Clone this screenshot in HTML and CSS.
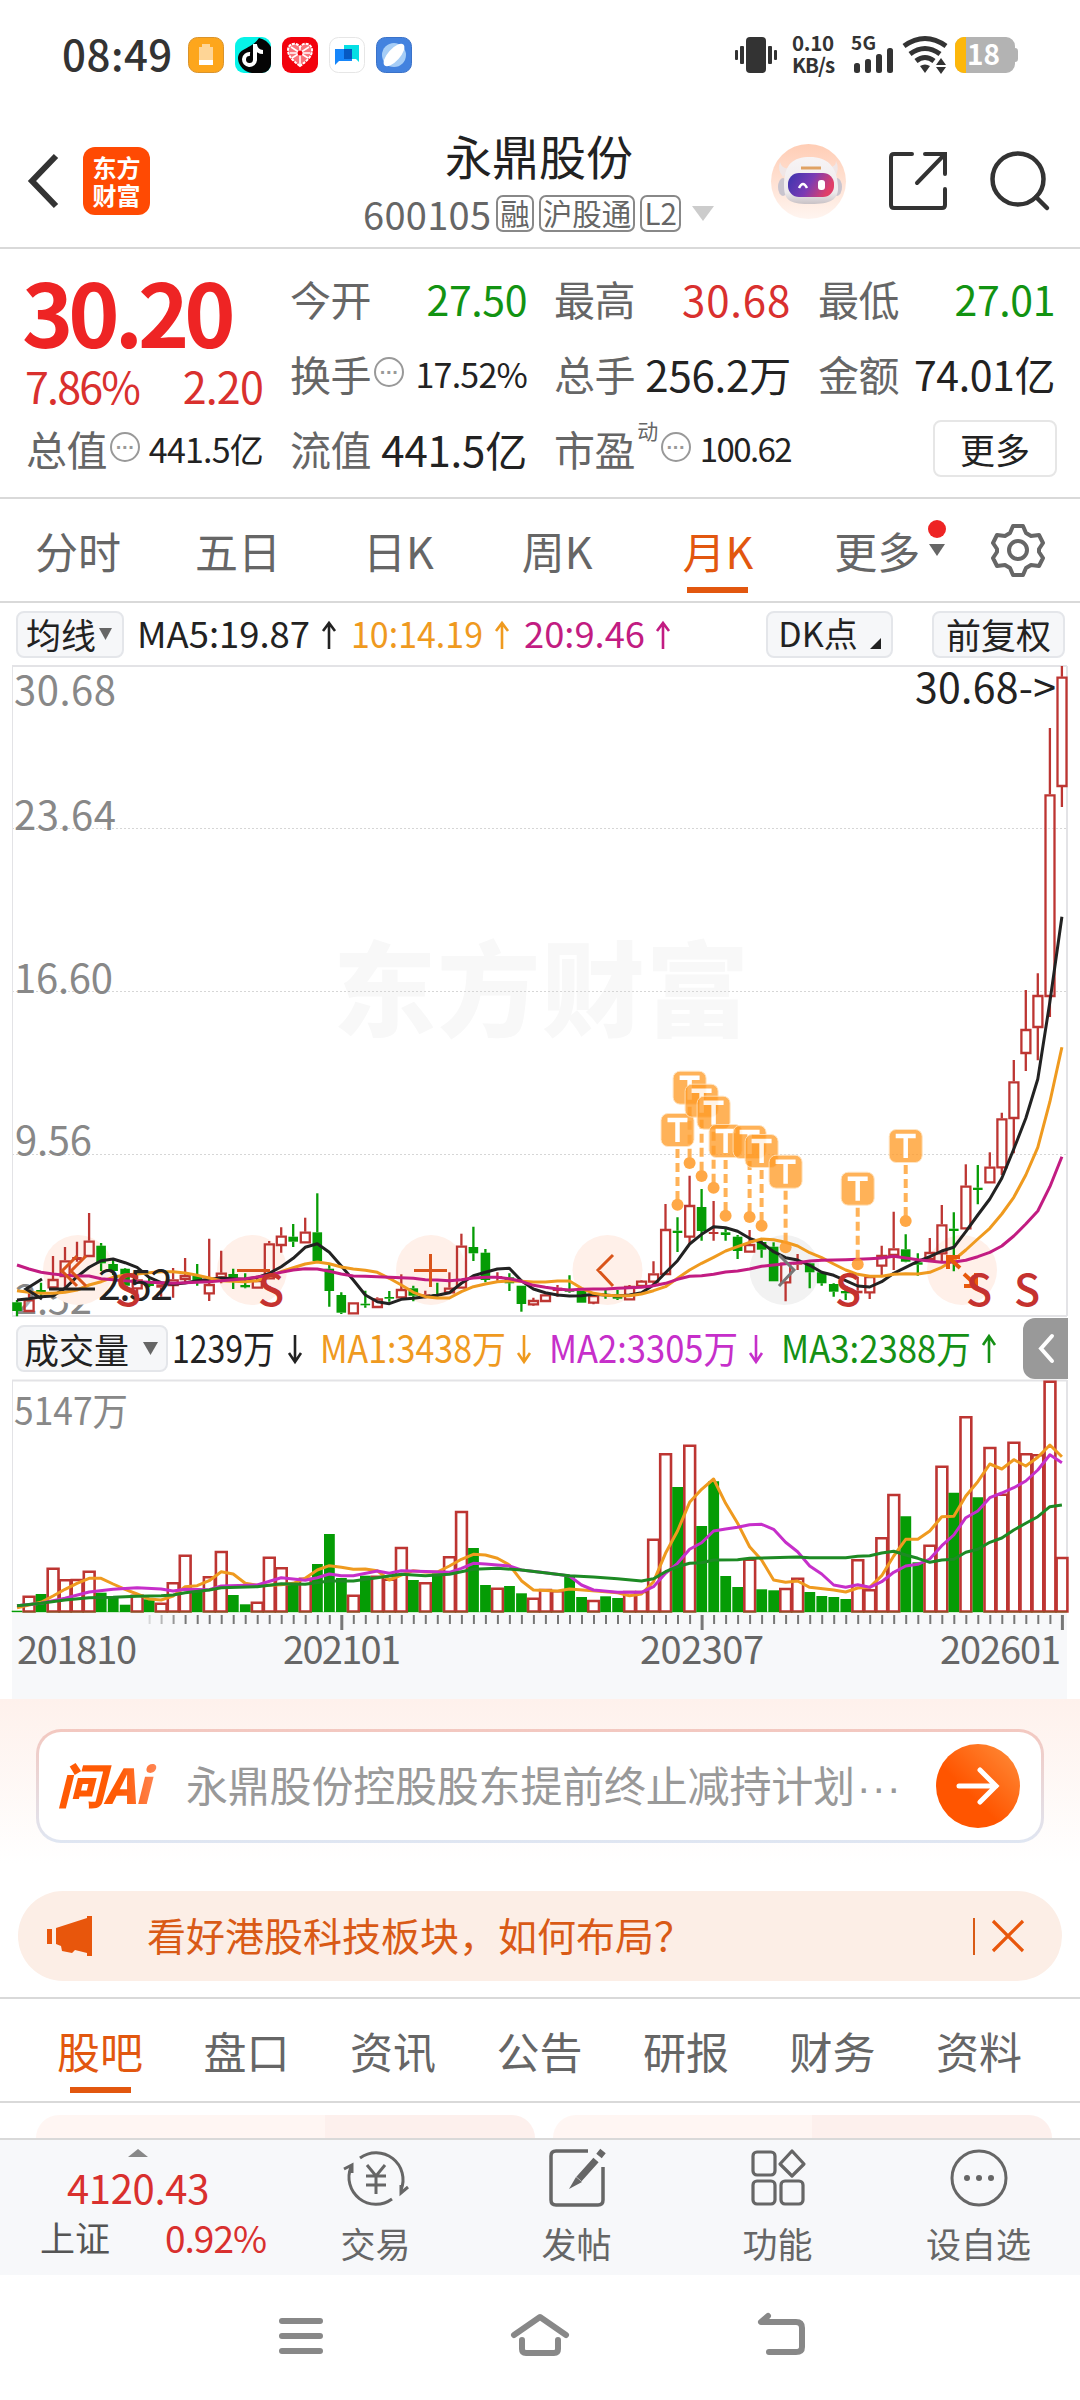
FILE: index.html
```html
<!DOCTYPE html>
<html lang="zh-CN">
<head>
  <meta charset="UTF-8" />
  <meta name="viewport" content="width=device-width, initial-scale=1.0"/>
  <title>永鼎股份 600105</title>
  <link rel="stylesheet" href="styles.css">
</head>
<body>

  <!-- 状态栏 -->
  <div class="status">
    <span class="time">08:49</span>
    <div class="apps">
      <svg width="36" height="36" viewBox="0 0 36 36"><rect x=".5" y=".5" width="35" height="35" rx="9" fill="#fda61c" stroke="#d9932c"/><path d="M14 7h8v3h3v18H11V10h3z" fill="#fed596"/><rect x="11" y="23" width="14" height="5" fill="#fff"/></svg>
      <svg width="36" height="36" viewBox="0 0 36 36"><rect width="36" height="36" rx="9" fill="#06f3e8"/><path d="M24 1a18 18 0 0 1 12 9v17a9 9 0 0 1-9 9H17A16 16 0 0 1 3 22C3 10 16 13 24 1z" fill="#050505"/><path d="M20 7v16a5.500 5.500 0 1 1-5-6M20 8c1 5 4 7 8 7" fill="none" stroke="#fff" stroke-width="4"/></svg>
      <svg width="36" height="36" viewBox="0 0 36 36"><rect width="36" height="36" rx="9" fill="#f2020d"/><path d="M18 29C10 23 6 19 6 13s8-9 12-3c4-6 12-3 12 3s-4 10-12 16z" fill="#f9737a" stroke="#fff" stroke-width="2" stroke-dasharray="3 1"/><path d="M9 10l17 11M27 10L10 21M18 9v19M8 16h20" stroke="#fff" stroke-width="1.500"/><circle cx="18" cy="16" r="2.500" fill="#f2020d"/></svg>
      <svg width="36" height="36" viewBox="0 0 36 36"><rect x=".5" y=".5" width="35" height="35" rx="9" fill="#fff" stroke="#e6e6e6"/><path d="M15 8h15v17l-3-3H15z" fill="#05dfe4"/><path d="M6 12h17v12H10l-4 4z" fill="#1686fa"/><path d="M15 12h8v10h-8z" fill="#0659c3"/></svg>
      <svg width="36" height="36" viewBox="0 0 36 36"><rect x=".5" y=".5" width="35" height="35" rx="9" fill="#4382df" stroke="#3a72c9"/><circle cx="18" cy="18" r="12" fill="#a6cdf6"/><ellipse cx="18" cy="18" rx="6" ry="14" transform="rotate(42 18 18)" fill="#fff"/></svg>
    </div>
    <div class="signals">
      <svg width="44" height="38" viewBox="0 0 44 38" fill="#333"><rect x="11" y="1" width="20" height="36" rx="4"/><rect y="14" width="3" height="10" rx="1"/><rect x="5" y="10" width="4" height="18" rx="1"/><rect x="33" y="10" width="4" height="18" rx="1"/><rect x="39" y="14" width="3" height="10" rx="1"/></svg>
      <div class="speed"><b>0.10</b><b>KB/s</b></div>
      <svg class="cell" width="44" height="38" viewBox="0 0 44 38" fill="#333"><text x="0" y="14" font-size="19" font-weight="700" textLength="25">5G</text><rect x="3" y="27" width="6" height="10" rx="2.500"/><rect x="14" y="23" width="6" height="14" rx="2.500"/><rect x="25" y="18" width="6" height="19" rx="2.500"/><rect x="36" y="12" width="6" height="25" rx="2.500"/></svg>
      <svg class="wifi" width="44" height="38" viewBox="0 0 44 38"><path d="M1 10Q22-5 43 10M7 18q15-11 30 0M13 25q9-7 18 0" fill="none" stroke="#333" stroke-width="5"/><path d="M17 30q5-3 10 0l-5 7zM33 29l5-7 5 7zM33 31l5 7 5-7z" fill="#333"/></svg>
      <svg width="64" height="36" viewBox="0 0 64 36"><path d="M9 0h42a9 9 0 0 1 9 9v2q3 0 3 3v8q0 3-3 3v2a9 9 0 0 1-9 9H9a9 9 0 0 1-9-9V9a9 9 0 0 1 9-9z" fill="#b3b3b3"/><path d="M11 0v36H9a9 9 0 0 1-9-9V9a9 9 0 0 1 9-9z" fill="#fdb70a"/><text x="12" y="28" font-size="28" font-weight="700" fill="#fff" textLength="33">18</text></svg>
    </div>
  </div>

  <!-- 标题栏 -->
  <header class="header">
    <svg class="back" width="32" height="56" viewBox="0 0 32 56"><path d="M28 3L4 28l24 25" fill="none" stroke="#333" stroke-width="6"/></svg>
    <div class="brand"><span>东方</span><span>财富</span></div>
    <div class="title">
      <h1>永鼎股份</h1>
      <div class="sub">
        <span class="code">600105</span>
        <span class="tag">融</span><span class="tag">沪股通</span><span class="tag">L2</span>
        <svg width="22" height="15" viewBox="0 0 22 15"><path d="M0 0h22L11 15z" fill="#ccc"/></svg>
      </div>
    </div>
    <div class="tools">
      <svg width="75" height="75" viewBox="0 0 75 75">
        <defs>
          <linearGradient id="halo" x2="0" y2="1"><stop offset="0" stop-color="#ffcdb5"/><stop offset="1" stop-color="#fff5f0"/></linearGradient>
          <linearGradient id="shell" x2="0" y2="1"><stop offset="0" stop-color="#f7f4f5"/><stop offset=".75" stop-color="#eeeaec"/><stop offset="1" stop-color="#c9c2c6"/></linearGradient>
          <linearGradient id="visor" x2="1" y2=".3"><stop offset="0" stop-color="#3a34ae"/><stop offset=".55" stop-color="#7a3bb4"/><stop offset="1" stop-color="#e03e68"/></linearGradient>
        </defs>
        <circle cx="37.500" cy="37.500" r="37.500" fill="url(#halo)"/>
        <path d="M9 18q2 8 11 6l-8 9q-6-7-3-15zM65 17q0 7-9 6l8 10q5-8 1-16z" fill="#f0e6e6"/>
        <ellipse cx="12" cy="43" rx="5" ry="9" fill="#c9c4ce"/><ellipse cx="66" cy="43" rx="5" ry="9" fill="#c9c4ce"/>
        <path d="M13 42C13 20 22 13 39 13s27 9 28 29c1 14-8 18-27 18s-27-2-27-18z" fill="url(#shell)"/>
        <rect x="17" y="29" width="46" height="24" rx="11" fill="url(#visor)"/>
        <path d="M28 44q4-8 8 0" fill="none" stroke="#fff" stroke-width="2.500"/><rect x="47" y="36" width="7" height="10" rx="3" fill="#fff"/>
        <path d="M30 24h20" stroke="#e0a264" stroke-width="3"/>
      </svg>
      <svg width="58" height="58" viewBox="0 0 58 58" fill="none" stroke="#333" stroke-width="4" stroke-linecap="round"><path d="M23 2H5Q2 2 2 5v48q0 3 3 3h48q3 0 3-3V37M36 2h20v20M56 2L28 31"/></svg>
      <svg width="60" height="60" viewBox="0 0 60 60" fill="none" stroke="#333" stroke-width="4.500" stroke-linecap="round"><circle cx="28" cy="28" r="25.500"/><path d="M46 46l11 11"/></svg>
    </div>
  </header>

  <!-- 行情数据 -->
  <section class="quote">
    <div class="now">
      <strong>30.20</strong>
      <div class="change"><span>7.86%</span><span>2.20</span></div>
    </div>
    <div class="cell-q"><label>今开</label><span class="green">27.50</span></div>
    <div class="cell-q"><label>最高</label><span class="red wide">30.68</span></div>
    <div class="cell-q"><label>最低</label><span class="green">27.01</span></div>
    <div class="cell-q"><label>换手<i class="info">···</i></label><span class="small">17.52%</span></div>
    <div class="cell-q"><label>总手</label><span class="big">256.2万</span></div>
    <div class="cell-q"><label>金额</label><span>74.01亿</span></div>
    <div class="cell-q"><label>总值<i class="info">···</i></label><span class="small">441.5亿</span></div>
    <div class="cell-q"><label>流值</label><span class="big">441.5亿</span></div>
    <div class="cell-q"><label>市盈<sup>动</sup><i class="info">···</i></label><span class="small pe">100.62</span></div>
    <div class="cell-q end"><button class="more">更多</button></div>
  </section>

  <!-- 周期切换 -->
  <nav class="periods">
    <span>分时</span><span>五日</span><span>日K</span><span>周K</span><span class="active">月K</span>
    <span class="drop">更多<svg width="18" height="36" viewBox="0 0 18 36"><circle cx="9" cy="9" r="9" fill="#ee2424"/><path d="M1 24h16L9 36z" fill="#666"/></svg></span>
    <svg class="gear" width="54" height="54" viewBox="0 0 54 54" fill="none" stroke="#666" stroke-width="4" stroke-linejoin="round"><path d="M22 3h10l3 7 5 3 8-1 4 8-4 6v3l4 6-4 8-8-1-5 3-3 7H22l-3-7-5-3-8 1-4-8 4-6v-3l-4-6 4-8 8 1 5-3z"/><circle cx="27" cy="27" r="9"/></svg>
  </nav>

  <!-- 均线 -->
  <div class="ma-bar">
    <button class="pill ma">均线<svg width="13" height="12" viewBox="0 0 13 12"><path d="M0 0h13L6.500 12z" fill="#666"/></svg></button>
    <svg class="legend" width="540" height="62" viewBox="136 603 540 62" font-size="36">
      <text x="137" y="648" fill="#222" textLength="173" lengthAdjust="spacingAndGlyphs">MA5:19.87</text>
      <text x="351" y="648" fill="#ef9a1f" textLength="132" lengthAdjust="spacingAndGlyphs">10:14.19</text>
      <text x="524" y="648" fill="#c21c82" textLength="121" lengthAdjust="spacingAndGlyphs">20:9.46</text>
      <g fill="none" stroke-width="2.600"><path d="M329 649v-26m-6 8l6-8 6 8" stroke="#222"/><path d="M502 649v-26m-6 8l6-8 6 8" stroke="#ef9a1f"/><path d="M663 649v-26m-6 8l6-8 6 8" stroke="#c21c82"/></g>
    </svg>
    <button class="pill dk">DK点<svg width="11" height="11" viewBox="0 0 11 11"><path d="M11 0v11H0z" fill="#222"/></svg></button>
    <button class="pill fq">前复权</button>
  </div>

  <!-- K线图 -->
  <svg class="chart" id="kline" width="1080" height="652" viewBox="0 665 1080 652">
    <text x="333" y="1029" font-size="103" font-weight="900" fill="#f8f8f8" textLength="416">东方财富</text>
    <g stroke="#d6d6d6" stroke-width="1" stroke-dasharray="2 2"><path d="M12 828.500h1055M12 991.500h1055M12 1154.500h1055"/></g>
    <path d="M12.500 666v650" stroke="#e3e3e6"/><path d="M1067 666v650M12 666h1055M12 1316h1055" stroke="#e3e3e6" stroke-width="2"/>
    <g font-size="40" fill="#888"><text x="14" y="705" textLength="102">30.68</text><text x="14" y="830" textLength="102">23.64</text><text x="14" y="993" textLength="99">16.60</text><text x="15" y="1155" textLength="77">9.56</text><text x="15" y="1314" textLength="77">2.52</text></g>
    <g stroke="none">
      <g fill="#fff0e9"><circle cx="78" cy="1270" r="35"/><circle cx="252" cy="1270" r="35"/><circle cx="431" cy="1270" r="35"/><circle cx="607.500" cy="1270" r="35"/><circle cx="962" cy="1270" r="35"/></g>
      <circle cx="784.500" cy="1270" r="35" fill="#f2f2f2"/>
    </g>
    <g id="candles" stroke-width="2.300"></g>
    <g id="lines" fill="none" stroke-width="3" stroke-linejoin="round"></g>
    <g stroke="#d9541a" stroke-width="3" fill="none">
      <path d="M77 1256l-15 15 15 15M86 1256l-15 15 15 15M237 1270.500h33M414 1270.500h33M430.500 1254v33M613 1255l-15 15 15 16"/>
      <path d="M779 1255l15 15-15 16" stroke="#777"/>
      <g stroke="#e8590c" stroke-width="4"><path d="M948 1269v-12h12M948 1257l12 11M964 1274l12 11M964 1286h12v-13"/></g>
    </g>
    <g font-size="41" fill="#222"><text x="915" y="703" textLength="141">30.68-&gt;</text><text x="98" y="1300" textLength="75">2.52</text></g>
    <path d="M42 1279l-16 10 16 10M49 1289h46" fill="none" stroke="#222" stroke-width="3"/>
    <g id="marks"></g>
    <g font-size="43" font-weight="500" fill="#c5322f"><text x="115" y="1306">S</text><text x="258" y="1306">S</text><text x="835" y="1306">S</text><text x="966" y="1306">S</text><text x="1014" y="1306">S</text></g>
  </svg>

  <!-- 成交量 -->
  <div class="vol-bar">
    <button class="pill vol">成交量<svg width="15" height="13" viewBox="0 0 15 13"><path d="M0 0h15L7.500 13z" fill="#666"/></svg></button>
    <svg class="legend" width="840" height="62" viewBox="170 1318 840 62" font-size="38">
      <text x="172" y="1363" fill="#222" textLength="103" lengthAdjust="spacingAndGlyphs">1239万</text>
      <text x="320" y="1363" fill="#ef9a1f" textLength="186" lengthAdjust="spacingAndGlyphs">MA1:3438万</text>
      <text x="549" y="1363" fill="#c62fca" textLength="189" lengthAdjust="spacingAndGlyphs">MA2:3305万</text>
      <text x="781" y="1363" fill="#159015" textLength="190" lengthAdjust="spacingAndGlyphs">MA3:2388万</text>
      <g fill="none" stroke-width="2.600"><path d="M295 1335v27m-6-9l6 9 6-9" stroke="#222"/><path d="M524 1335v27m-6-9l6 9 6-9" stroke="#ef9a1f"/><path d="M756 1335v27m-6-9l6 9 6-9" stroke="#c62fca"/><path d="M989 1363v-27m-6 9l6-9 6 9" stroke="#159015"/></g>
    </svg>
    <div class="fold"><svg width="16" height="29" viewBox="0 0 16 29"><path d="M14 2L3 14.500 14 27" fill="none" stroke="#fff" stroke-width="4" stroke-linecap="round"/></svg></div>
  </div>
  <svg class="chart" id="volume" width="1080" height="319" viewBox="0 1380 1080 319">
    <path d="M12 1613h1055v86H12z" fill="#f7f8fa"/>
    <path d="M12.500 1380v232" stroke="#e3e3e6"/><path d="M1067 1380v232M12 1380.500h1055" stroke="#e3e3e6" stroke-width="2"/>
    <text x="14" y="1425" font-size="38" fill="#888" textLength="114" lengthAdjust="spacingAndGlyphs">5147万</text>
    <g id="bars" stroke-width="2.600"></g>
    <g id="vlines" fill="none" stroke-width="3" stroke-linejoin="round"></g>
    <g id="ticks" stroke="#777"></g>
    <g font-size="38" fill="#666"><text x="17" y="1664" textLength="120">201810</text><text x="283" y="1664" textLength="118">202101</text><text x="640" y="1664" textLength="124">202307</text><text x="940" y="1664" textLength="121">202601</text></g>
  </svg>

  <!-- 问AI -->
  <section class="ask">
    <div class="ask-box">
      <div class="ask-logo">问Ai</div>
      <p>永鼎股份控股股东提前终止减持计划<span>···</span></p>
      <div class="go"><svg width="44" height="40" viewBox="0 0 44 40" fill="none" stroke="#fff" stroke-width="5" stroke-linecap="round"><path d="M3 20h37M24 4l16 16-16 16"/></svg></div>
    </div>
  </section>

  <section class="notice">
    <svg width="46" height="40" viewBox="0 0 46 40" fill="#e8560c"><path d="M0 13h5v15H0zM9 12L40 2V0h5v40h-5v-3l-12-3-3 3-10-2-1-5-5-2z"/></svg>
    <p>看好港股科技板块，如何布局？</p>
    <i></i>
    <svg width="34" height="34" viewBox="0 0 34 34"><path d="M2 2l30 30M32 2L2 32" stroke="#e8560c" stroke-width="3.200"/></svg>
  </section>

  <nav class="tabs">
    <span class="active">股吧</span><span>盘口</span><span>资讯</span><span>公告</span><span>研报</span><span>财务</span><span>资料</span>
  </nav>

  <div class="cards"><div></div><div></div></div>

  <!-- 底部栏 -->
  <footer class="bottom">
    <div class="index">
      <svg width="20" height="8" viewBox="0 0 20 8"><path d="M10 0l10 8H0z" fill="#888"/></svg>
      <span class="point">4120.43</span>
      <div><span>上证</span><span class="red">0.92%</span></div>
    </div>
    <div class="item">
      <svg width="66" height="60" viewBox="0 0 66 60" fill="none" stroke="#666" stroke-width="3"><path d="M17 10A27 27 0 0 1 58 42M49 51A27 27 0 0 1 8 19M1 21l8-4v8M65 39l-7 6v-8"/><path d="M24 17l9 11 9-11M33 28v18M23 28h20M23 37h20"/></svg>
      <span>交易</span>
    </div>
    <div class="item">
      <svg width="56" height="60" viewBox="0 0 56 60" fill="none" stroke="#666" stroke-width="3.500"><path d="M39 3H7Q2 3 2 8v44q0 5 5 5h42q5 0 5-5V19"/><path d="M54 3l-4 5M47 12L30 31" stroke-width="7"/><path d="M27 29l6 5-13 7z" fill="#666" stroke="none"/></svg>
      <span>发帖</span>
    </div>
    <div class="item">
      <svg width="56" height="60" viewBox="0 0 56 60" fill="none" stroke="#666" stroke-width="3.200"><rect x="3" y="4" width="22" height="23" rx="4"/><rect x="3" y="33" width="22" height="23" rx="4"/><rect x="31" y="33" width="22" height="23" rx="4"/><path d="M42 3l12 13-12 12-12-12z" stroke-linejoin="round"/></svg>
      <span>功能</span>
    </div>
    <div class="item">
      <svg width="60" height="60" viewBox="0 0 60 60"><circle cx="30" cy="30" r="27" fill="none" stroke="#666" stroke-width="3"/><g fill="#666"><circle cx="18" cy="30" r="3"/><circle cx="30" cy="30" r="3"/><circle cx="42" cy="30" r="3"/></g></svg>
      <span>设自选</span>
    </div>
  </footer>

  <!-- 系统导航 -->
  <div class="sysnav">
    <svg width="46" height="46" viewBox="0 0 46 46" stroke="#888" stroke-width="6" stroke-linecap="round"><path d="M4 9h38M4 24h38M4 39h38"/></svg>
    <svg width="60" height="46" viewBox="0 0 60 46" fill="none" stroke="#888" stroke-width="6" stroke-linecap="round" stroke-linejoin="round"><path d="M4 23L30 5l26 18M12 28v9q0 4 4 4h28q4 0 4-4v-9"/></svg>
    <svg width="50" height="46" viewBox="0 0 50 46" fill="none" stroke="#888" stroke-width="6" stroke-linecap="round" stroke-linejoin="round"><path d="M12 4L5 10h35q6 0 6 6v19q0 5-6 5H13"/></svg>
  </div>

  <script src="script.js"></script>
</body>
</html>
```
FILE: styles.css
```css
* {
  box-sizing: border-box;
}
body {
  margin: 0;
  width: 1080px;
  height: 2400px;
  overflow: hidden;
  background: #fff;
  color: #222;
  font-family: "Noto Sans CJK SC", sans-serif;
  white-space: nowrap;
}
svg {
  display: block;
  flex: none;
  overflow: visible;
}
h1, p {
  margin: 0;
  font-weight: 400;
}
button {
  padding: 0;
  font-family: inherit;
  color: #222;
}
.red {
  color: #d9302e;
}
.green {
  color: #129312;
}

/* 状态栏 */
.status {
  display: flex;
  align-items: center;
  height: 110px;
  padding: 0 61px 0 62px;
}
.time {
  width: 126px;
  margin-top: -5px;
  font-size: 42px;
  font-weight: 500;
  color: #333;
  letter-spacing: 0.5px;
}
.apps {
  display: flex;
  gap: 11px;
}
.signals {
  display: flex;
  align-items: center;
  margin-left: auto;
  color: #333;
}
.speed {
  display: flex;
  flex-direction: column;
  width: 43px;
  margin: -5px 0 0 13px;
  font-size: 20.5px;
  line-height: 22px;
  letter-spacing: -0.3px;
}
.speed b + b {
  letter-spacing: -1px;
}
.cell {
  margin-left: 16px;
}
.wifi {
  margin: 0 8px;
}

/* 标题栏 */
.header {
  display: flex;
  align-items: center;
  height: 139px;
  padding: 5px 30px 0 28px;
  border-bottom: 2px solid #d9d9d9;
}
.back {
  margin-bottom: 1px;
}
.brand {
  display: flex;
  flex-direction: column;
  align-items: center;
  justify-content: center;
  flex: none;
  width: 67px;
  height: 68px;
  margin: 0 0 1px 23px;
  border-radius: 12px;
  background: #ff4a03;
  color: #fff;
  font-size: 24px;
  font-weight: 700;
  line-height: 28px;
}
.title {
  flex: 1;
  padding-left: 213px;
}
.title h1 {
  margin: -2px 0 0 82px;
  font-size: 47px;
  line-height: 64px;
}
.sub {
  display: flex;
  align-items: center;
  height: 50px;
  padding-top: 3px;
}
.code {
  margin-right: 5px;
  font-size: 38px;
  line-height: 48px;
  color: #666;
  letter-spacing: 0.3px;
}
.tag {
  height: 37px;
  margin-right: 5px;
  padding: 0 2px;
  border: 2px solid #888;
  border-radius: 7px;
  font-size: 29.5px;
  line-height: 31px;
  color: #666;
}
.sub svg {
  margin-left: 6px;
}
.tools {
  display: flex;
  align-items: center;
  gap: 43px;
}

/* 行情数据 */
.quote {
  display: grid;
  grid-template-columns: repeat(4, 237px);
  grid-template-rows: repeat(3, 75px);
  column-gap: 27px;
  height: 250px;
  padding: 12px 0 0 26px;
  border-bottom: 2px solid #d9d9d9;
}
.now {
  grid-row: span 2;
  color: #ee2424;
}
.now strong {
  display: block;
  margin-left: -4px;
  font-size: 87px;
  font-weight: 700;
  line-height: 98px;
  letter-spacing: -5px;
}
.change {
  display: flex;
  justify-content: space-between;
  padding-top: 3px;
  margin-left: -1px;
  font-size: 43px;
  line-height: 46px;
  color: #d9302e;
  letter-spacing: -1.8px;
}
.change span + span {
  letter-spacing: -0.8px;
}
.cell-q {
  display: flex;
  align-items: center;
  justify-content: space-between;
  font-size: 41px;
  line-height: 73px;
  letter-spacing: -0.4px;
}
.cell-q .wide {
  font-size: 42px;
  letter-spacing: 0.8px;
}
.cell-q .big {
  font-size: 42px;
  letter-spacing: -0.2px;
}
.cell-q label {
  display: flex;
  align-items: center;
  color: #666;
}
.cell-q .small {
  font-size: 34px;
  letter-spacing: -0.8px;
}
.cell-q .pe {
  font-size: 33px;
  letter-spacing: -1.6px;
}
.cell-q sup {
  align-self: flex-start;
  font-size: 21px;
  line-height: 36px;
  margin-left: 2px;
}
.info {
  display: flex;
  align-items: center;
  justify-content: center;
  width: 30px;
  height: 30px;
  margin: -4px 0 0 3px;
  border: 2px solid #999;
  border-radius: 50%;
  font-family: "Liberation Sans", sans-serif;
  font-size: 20px;
  font-style: normal;
  font-weight: 700;
  line-height: 26px;
  color: #999;
}
.cell-q.end {
  justify-content: flex-end;
}
.more {
  width: 124px;
  height: 57px;
  margin-right: -2px;
  border: 2px solid #e6e6e6;
  border-radius: 8px;
  background: #fff;
  font-size: 35px;
  line-height: 48px;
}

/* 周期切换 */
.periods {
  display: flex;
  align-items: center;
  height: 104px;
  padding: 0 35px 0 35px;
  border-bottom: 2px solid #d9d9d9;
  font-size: 43px;
  line-height: 102px;
  color: #666;
}
.periods span {
  margin-right: 74px;
}
.periods span:nth-child(3) {
  margin: 0 88px 0 8px;
}
.periods span:nth-child(4) {
  margin-right: 90px;
}
.periods .active {
  margin-right: 81px;
}
.periods .drop {
  display: flex;
  align-items: center;
  margin-right: 0;
}
.periods .gear {
  margin-left: auto;
}
.drop svg {
  margin: 0 0 24px 8px;
}
.active {
  color: #e2570f;
  background: linear-gradient(#e2570f, #e2570f) center bottom 8px / 61px 6px no-repeat;
}

/* 均线 */
.ma-bar,
.vol-bar {
  display: flex;
  align-items: center;
  height: 62px;
  padding-left: 16px;
}
.pill {
  display: flex;
  align-items: center;
  justify-content: center;
  flex: none;
  height: 47px;
  border: 2px solid #e4e6ea;
  border-radius: 8px;
  background: #f6f7f9;
  font-size: 35px;
  line-height: 40px;
}
.ma {
  width: 108px;
  margin-right: 12px;
  padding-right: 2px;
}
.ma svg {
  margin-left: 3px;
}
.dk {
  width: 127px;
  margin-left: 90px;
  padding-bottom: 2px;
  font-size: 34px;
}
.dk svg {
  margin: 20px 0 0 12px;
}
.fq {
  width: 133px;
  margin-left: 39px;
}
.vol-bar {
  height: 63px;
}
.vol {
  width: 152px;
  margin-right: 2px;
  padding-right: 2px;
}
.vol svg {
  margin-left: 14px;
}
.fold {
  display: flex;
  align-items: center;
  justify-content: center;
  width: 45px;
  height: 61px;
  margin-left: 13px;
  border-radius: 12px 0 0 12px;
  background: #999;
}

/* 问AI */
.ask {
  height: 192px;
  padding: 30px 36px 0;
  background: linear-gradient(#fef1ec, #fff 165px);
}
.ask-box {
  display: flex;
  align-items: center;
  height: 114px;
  padding: 0 21px 0 18px;
  border: 3px solid transparent;
  border-radius: 25px;
  background: linear-gradient(#fff, #fff) padding-box, linear-gradient(#f3c8c0, #dfe6f2) border-box;
}
.ask-logo {
  flex: none;
  width: 104px;
  margin: -6px 25px 0 0;
  font-size: 48px;
  font-weight: 900;
  font-style: italic;
  line-height: 60px;
  letter-spacing: -1px;
  background: linear-gradient(90deg, #ff5a04 60%, #ff8a5c);
  -webkit-background-clip: text;
  background-clip: text;
  color: transparent;
}
.ask-box p {
  flex: 1;
  font-size: 42px;
  line-height: 60px;
  letter-spacing: -0.2px;
  color: #999;
}
.ask-box p span {
  margin-left: 2px;
  font-family: "Liberation Sans", sans-serif;
  font-size: 42px;
  letter-spacing: 1px;
}
.go {
  display: flex;
  align-items: center;
  justify-content: center;
  flex: none;
  width: 84px;
  height: 84px;
  border-radius: 50%;
  background: linear-gradient(45deg, #ff5500 40%, #ff8f3c);
}

.notice {
  display: flex;
  align-items: center;
  height: 90px;
  margin: 0 18px 16px;
  padding: 0 37px 0 29px;
  border-radius: 45px;
  background: #fceee6;
}
.notice p {
  flex: 1;
  margin: -5px 0 0 54px;
  font-size: 39px;
  line-height: 60px;
  color: #d95a16;
}
.notice i {
  width: 2px;
  height: 37px;
  margin-right: 16px;
  background: #d95a16;
}

/* 资讯标签 */
.tabs {
  display: flex;
  justify-content: space-between;
  height: 106px;
  padding: 0 58px 0 57px;
  border-top: 2px solid #d9d9d9;
  border-bottom: 2px solid #d9d9d9;
  font-size: 43px;
  line-height: 102px;
  color: #666;
}
.cards {
  display: flex;
  gap: 18px;
  height: 35px;
  padding: 12px 28px 0 36px;
}
.cards div {
  flex: 1;
  border-radius: 25px 25px 0 0;
  background: linear-gradient(90deg, #fff6f3 58%, #fdf0ed 58%);
}
.cards div + div {
  background: linear-gradient(90deg, #fff6f3 52%, #fdf0ed 52%);
}

/* 底部栏 */
.bottom {
  display: flex;
  height: 137px;
  padding-left: 34px;
  border-top: 2px solid #d9d9d9;
  background: #f7f8fa;
  color: #666;
}
.index {
  display: flex;
  flex-direction: column;
  align-items: center;
  width: 210px;
  padding-top: 9px;
}
.index > svg {
  margin: 0 0 4px -2px;
}
.point {
  margin-left: -2px;
  height: 54px;
  font-size: 40px;
  line-height: 52px;
  color: #d9302e;
  letter-spacing: -0.3px;
}
.index div {
  display: flex;
  justify-content: space-between;
  width: 226px;
  margin-left: 28px;
  font-size: 35px;
  line-height: 44px;
  color: #555;
}
.index .red {
  color: #d9302e;
  font-size: 37px;
  letter-spacing: -1px;
}
.item {
  display: flex;
  flex-direction: column;
  align-items: center;
  width: 201px;
  padding-top: 8px;
  font-size: 35px;
  line-height: 50px;
}
.item:nth-child(2) {
  margin-left: 31px;
}
.item svg {
  margin-bottom: 10px;
}

/* 系统导航 */
.sysnav {
  display: flex;
  justify-content: center;
  gap: 186px;
  height: 126px;
  padding: 37px 0 0 3px;
}
```
FILE: script.js
```javascript
// 颜色, 最高, 实体上, 实体下, 最低
const candles = [
  "g 780 787 813 829", "r 760 778 813 813", "g 728 750 757 768", "r 648 717 742 742",
  "r 621 661 708 745", "r 605 651 660 665", "r 519 602 648 648", "g 609 617 670 693",
  "g 660 672 693 705", "g 684 686 737 740", "r 700 718 745 760", "g 715 728 738 742",
  "r 725 733 743 770", "r 684 718 735 773", "r 654 705 717 730", "g 672 708 720 737",
  "r 596 732 760 783", "r 632 698 712 730", "g 686 702 713 747", "g 700 735 742 745",
  "r 715 720 743 743", "r 603 610 715 715", "r 562 587 615 638", "g 552 590 605 621",
  "r 533 575 607 607", "g 460 577 663 663", "g 675 686 753 800", "g 757 765 818 822",
  "r 787 787 820 820", "g 752 791 796 803", "r 772 775 801 801", "g 753 771 776 785",
  "r 703 747 772 772", "g 737 745 767 784", "r 752 763 770 775", "g 728 762 768 772",
  "r 697 743 757 757", "r 581 617 743 743", "g 560 621 640 663", "g 627 638 720 727",
  "r 697 708 714 722", "g 700 712 730 753", "g 737 737 792 815", "r 773 780 793 797",
  "r 760 763 783 783", "r 735 743 753 770", "g 706 750 755 758", "g 752 752 788 788",
  "r 760 765 788 793", "g 750 763 767 776", "g 750 763 776 780", "r 735 738 778 778",
  "r 720 722 738 738", "r 664 700 725 738", "r 492 567 702 702", "g 532 572 579 636",
  "r 407 495 590 612", "g 447 501 573 602", "r 483 576 582 602", "g 565 577 585 602",
  "g 585 590 633 657", "r 570 612 635 635", "g 600 606 629 653", "g 607 620 724 724",
  "r 665 668 727 784", "r 642 668 674 690", "g 668 670 697 745", "g 695 697 730 737",
  "g 730 732 755 770", "g 745 753 760 780", "r 710 752 760 767", "r 705 708 757 777",
  "r 617 645 677 709", "r 515 625 645 690", "g 583 628 665 667", "g 640 667 674 707",
  "r 594 636 657 665", "r 495 553 640 665", "g 517 566 573 694", "r 373 437 565 565",
  "g 375 443 450 493", "r 337 380 427 427", "r 218 235 382 405", "r 60 124 234 340",
  "r -150 -33 39 93", "r -200 -135 -39 61", "r -936 -737 -132 -69", "r -1122 -1090 -762 -699"
];

const ma = {
  "#222": [780,776,770,768,745,710,682,662,657,668,682,712,728,733,729,722,718,714,716,718,712,700,680,655,622,611,637,678,720,765,785,791,778,775,770,766,758,730,707,697,687,685,722,747,758,765,768,767,763,765,768,765,758,735,698,662,612,583,560,563,574,595,608,635,653,660,676,697,706,722,738,741,725,700,682,664,650,633,622,575,525,477,415,327,235,117,-115,-370],
  "#ef9a1f": [752,757,760,760,757,750,735,725,712,705,702,698,695,695,699,706,714,722,724,725,722,710,695,683,672,666,671,681,687,691,697,715,735,757,770,774,774,755,740,732,725,723,724,726,726,723,723,745,760,766,767,767,762,752,740,715,690,670,652,633,620,607,597,599,607,618,638,653,672,690,703,709,709,703,701,702,697,682,660,630,597,565,522,472,405,322,185,22],
  "#c21c82": [675,687,697,702,706,708,708,716,719,722,725,727,728,730,728,727,725,722,719,716,711,706,697,690,686,687,694,702,708,709,710,712,713,715,719,720,722,719,714,712,712,716,724,736,742,747,750,748,747,747,745,743,742,737,730,718,709,707,703,696,693,687,679,675,671,668,663,661,660,659,658,656,654,649,654,659,663,667,666,661,650,637,618,588,552,513,440,350]
};

const volumes = "g902 r857 g852 r773 r808 r807 r782 g848 g858 g884 r854 g868 r878 r817 r734 g843 r799 r723 g855 g883 r875 r740 r772 g820 r803 g762 g672 g804 r854 g797 r797 r806 r711 g810 r817 g790 r739 r603 g714 g825 r833 g828 g850 r863 r837 r841 g795 g861 r870 g859 g864 r843 r843 r686 r430 g531 r404 g648 g514 g798 g831 r746 g838 g841 r834 r803 g846 g858 g861 g867 r748 r838 r682 r552 g619 g757 r704 r467 g548 r319 g562 r411 r551 r395 r430 r433 r212 r741".split(" ");

// [序号, y] 折点
const volMa = {
  "#ef9a1f": [[0,893],[1,885],[2,877],[3,858],[4,838],[5,820],[6,805],[7,805],[8,822],[9,838],[10,852],[11,867],[12,870],[13,858],[14,830],[15,827],[16,812],[17,785],[18,792],[19,820],[20,826],[21,826],[22,824],[23,820],[24,805],[25,780],[26,767],[27,772],[28,778],[29,777],[30,782],[31,810],[32,795],[33,782],[34,786],[35,786],[36,768],[37,748],[38,733],[39,735],[40,745],[41,765],[42,812],[43,840],[45,843],[46,837],[49,845],[50,848],[51,857],[52,852],[53,815],[54,730],[55,663],[56,577],[57,538],[58,507],[59,580],[60,640],[61,710],[62,750],[63,810],[64,817],[65,813],[66,832],[68,840],[69,846],[70,834],[71,832],[72,797],[73,738],[74,688],[75,688],[76,663],[77,620],[78,619],[79,558],[80,515],[81,462],[82,477],[83,449],[84,468],[85,442],[86,405],[87,440]],
  "#c62fca": [[0,887],[2,880],[4,865],[6,846],[8,838],[10,833],[12,837],[13,843],[14,838],[16,839],[17,828],[20,825],[22,803],[24,811],[25,803],[26,792],[27,797],[28,797],[30,783],[31,790],[32,782],[36,787],[37,775],[38,760],[39,762],[41,768],[42,780],[44,788],[46,798],[47,825],[48,840],[50,847],[52,847],[53,830],[54,790],[55,760],[56,718],[57,698],[58,663],[59,657],[60,652],[61,644],[62,643],[63,658],[64,697],[65,725],[66,768],[67,792],[68,825],[69,832],[70,824],[71,832],[72,815],[73,787],[74,768],[75,763],[76,747],[77,707],[78,675],[79,623],[80,603],[81,563],[82,549],[83,533],[84,513],[85,480],[86,434],[87,458]],
  "#1d8a24": [[0,887],[2,880],[4,870],[6,863],[8,862],[10,859],[12,857],[13,855],[14,848],[16,840],[17,833],[20,830],[22,821],[24,823],[26,813],[28,813],[30,803],[32,793],[34,797],[36,793],[38,778],[40,775],[42,780],[46,797],[48,801],[50,806],[52,813],[53,806],[54,785],[55,770],[56,760],[57,758],[58,750],[60,749],[61,745],[65,741],[66,743],[69,743],[70,739],[71,737],[72,729],[73,724],[74,735],[75,745],[76,757],[77,750],[78,748],[79,727],[80,718],[81,697],[82,684],[83,660],[84,640],[85,620],[86,590],[87,585]]
};

// 做T标记: 序号, 标签中心, 圆点
const marks = [[55,270,494],[56,143,369],[57,182,408],[58,218,443],[59,303,527],[61,306,531],[62,333,557],[64,395,622],[70,446,673],[74,318,543]];

const RED = "#bd3532";
const GREEN = "#059c05";
const px = i => +(17 + i * 12.01).toFixed(1);
const ky = v => +(1040 + v / 3).toFixed(1);
const vy = v => +(1310 + v / 3).toFixed(1);
const put = (id, html) => { document.getElementById(id).innerHTML = html; };

put("candles", candles.map((row, i) => {
  const [c, hi, top, bot, lo] = row.split(" ");
  const x = px(i);
  const y1 = ky(hi), y2 = ky(top), y3 = ky(bot), y4 = ky(lo);
  const color = c === "r" ? RED : GREEN;
  const wick = `<path d="M${x} ${y1}V${y2}M${x} ${y3}V${y4}" stroke="${color}"/>`;
  if (c === "g" || y3 - y2 < 4) {
    return wick + `<path d="M${x - 4.8} ${y2}h9.600V${y3}h-9.600z" fill="${color}"/>`;
  }
  return wick + `<path d="M${x - 4.4} ${y2 + 1}h9V${y3}h-9z" fill="#fff" fill-opacity=".3" stroke="${color}"/>`;
}).join(""));

put("lines", Object.entries(ma).map(([color, ys]) =>
  `<polyline stroke="${color}" points="${ys.map((v, i) => px(i) + "," + ky(v)).join(" ")}"/>`
).join(""));

put("bars", volumes.map((s, i) => {
  const x = px(i);
  const y = vy(s.slice(1));
  return s[0] === "g"
    ? `<path d="M${x - 5.3} ${y}h10.800V1612h-10.800z" fill="${GREEN}"/>`
    : `<path d="M${x - 5.3} ${y + 1}h10.800V1611.500h-10.800z" fill="#fff" stroke="${RED}"/>`;
}).join("") + `<path d="M12 1612h1055" stroke="${GREEN}" stroke-width="1" opacity=".4"/>`);

put("vlines", Object.entries(volMa).map(([color, pts]) =>
  `<polyline stroke="${color}" points="${pts.map(p => px(p[0]) + "," + vy(p[1])).join(" ")}"/>`
).join(""));

let ticks = "";
for (let i = 11; i < 88; i++) {
  const big = i === 27 || i === 57 || i === 87;
  const fade = i < 14 ? (i - 10) / 4 : 1;
  ticks += `<path d="M${px(i) + 0.5} 1615v${big ? 15 : 9}" stroke-width="${big ? 3 : 2}" opacity="${fade}"/>`;
}
put("ticks", ticks);

put("marks", marks.map(([i, box, dot]) => {
  const x = px(i), y = ky(box), d = ky(dot);
  return `<g opacity=".85"><path d="M${x} ${y + 19}V${d}" stroke="#ffa53b" stroke-width="4" stroke-dasharray="9 5"/>
    <circle cx="${x}" cy="${d}" r="6" fill="#ff9a26"/>
    <rect x="${x - 16.5}" y="${y - 16.5}" width="33" height="33" rx="7" fill="#ff9a26" fill-opacity=".9" stroke="#ffe0b8"/>
    <path d="M${x - 10} ${y - 10}h20M${x} ${y - 10}v22" stroke="#fff" stroke-width="4.500"/></g>`;
}).join(""));
```
